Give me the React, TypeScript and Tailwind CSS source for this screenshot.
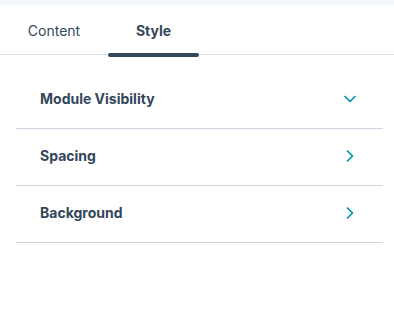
import { ChevronDown, ChevronRight } from "lucide-react";

const SECTIONS = [
  { label: "Module Visibility", open: true },
  { label: "Spacing", open: false },
  { label: "Background", open: false },
];

export default function App() {
  return (
    <div className="w-[394px] h-[333px] bg-white font-['Inter',sans-serif] text-[#33475b]">
      <div className="h-[6px] bg-[#f5f8fa]" />

      {/* Tabs */}
      <div className="flex h-[49px] border-b border-[#dfe3eb]">
        <button className="w-[108px] flex items-center justify-center text-[14px] text-[#33475b]">
          Content
        </button>
        <button className="relative w-[91px] flex items-center justify-center text-[14px] font-bold">
          Style
          <span className="absolute left-0 right-0 bottom-[-3px] h-[4px] rounded-full bg-[#33475b]" />
        </button>
      </div>

      {/* Sections */}
      <div className="pl-4 pr-[11px] pt-[17px]">
        {SECTIONS.map((s) => (
          <div
            key={s.label}
            className="flex items-center justify-between h-[57px] border-b border-[#cbd6e2] pl-6 pr-[23px] pb-[3px]"
          >
            <span className="text-[14px] font-bold">{s.label}</span>
            {s.open ? (
              <ChevronDown className="w-5 h-5 text-[#0091ae]" strokeWidth={2} />
            ) : (
              <ChevronRight className="w-5 h-5 text-[#0091ae]" strokeWidth={2} />
            )}
          </div>
        ))}
      </div>
    </div>
  );
}
